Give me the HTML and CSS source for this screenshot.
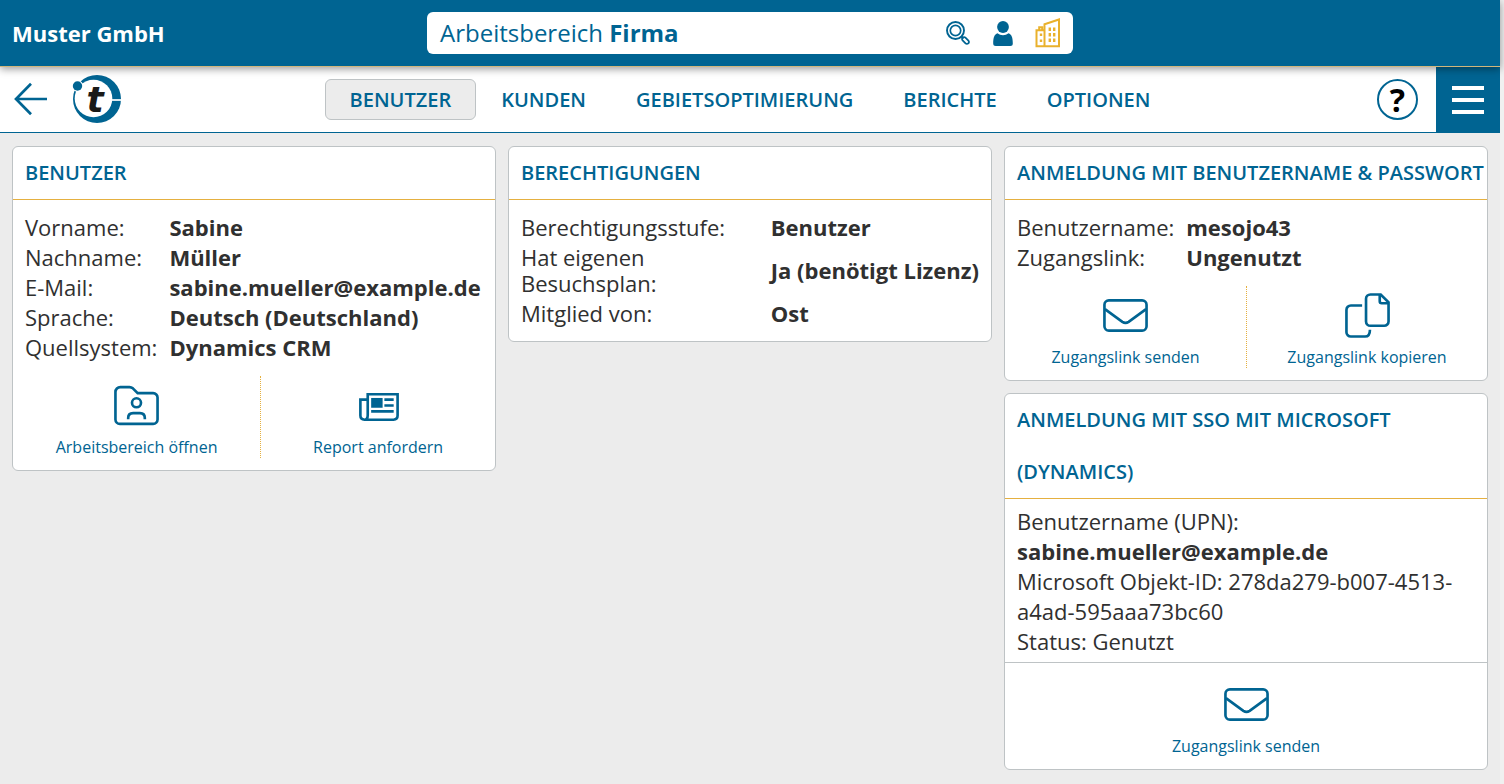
FILE: index.html
```html
<!DOCTYPE html>
<html lang="de">
<head>
<meta charset="utf-8">
<meta name="viewport" content="width=device-width, initial-scale=1">
<title>Muster GmbH – Benutzer</title>
<link rel="stylesheet" href="styles.css">
</head>
<body>
<svg class="sprite" aria-hidden="true">
  <symbol id="mail" viewBox="0 0 48 48">
    <rect x="2.500" y="8.500" width="43" height="31" rx="4.500"/>
    <path d="M3 17.500 20.800 30.500q3.200 2.200 6.400 0L45 17.500"/>
  </symbol>
</svg>
<header class="topbar">
  <div class="company">Muster GmbH</div>
  <div class="workspace">
    <span class="workspace-name">Arbeitsbereich <b>Firma</b></span>
    <button class="tool" aria-label="Suchen">
      <svg width="26" height="26" viewBox="0 0 26 26" fill="none" stroke="currentColor"><circle cx="10.500" cy="10.500" r="8.500" stroke-width="1.900"/><circle cx="10.500" cy="10.500" r="5.200" stroke-width="1.700"/><path d="m16.500 16.500 2 2" stroke-width="1.800"/><rect x="-2" y="-4" width="4" height="8" rx="1.900" stroke-width="1.800" transform="translate(20.500 20.500) rotate(-45)"/></svg>
    </button>
    <button class="tool" aria-label="Benutzer">
      <svg width="26" height="26" viewBox="0 0 26 26" fill="currentColor"><circle cx="13" cy="7" r="5.900"/><path d="M7.500 13.200c3 2.600 8 2.600 11 0 3 1 4.300 4.200 4.300 10.300q0 2.500-2.500 2.500H5.700q-2.500 0-2.500-2.500c0-6.100 1.300-9.300 4.300-10.300z"/></svg>
    </button>
    <button class="tool tool-active" aria-label="Firma">
      <svg width="26" height="30" viewBox="0 0 26 30" fill="none" stroke="currentColor" stroke-width="2"><path d="M9.500 28.200V6.200L24 1.500v26.700zM9.500 12.200h-8v16h8M4.200 12V9.200h3V12"/><path d="M14.800 9.500v3.500M14.800 15v3.500M14.800 20.500V24M19.200 9.500v3.500M19.200 15v3.500M19.200 20.500V24M6 15.500V18M6 21.500V24" stroke-width="2.400"/></svg>
    </button>
  </div>
</header>
<div class="navbar">
  <div class="nav-left">
    <a class="back" href="#" aria-label="Zurück"><svg width="34" height="34" viewBox="0 0 34 34" fill="none" stroke="currentColor" stroke-width="2.700"><path d="M17 1.800 2 17l15 15.200M2 17h31"/></svg></a>
    <a class="logo" href="#" aria-label="Startseite"><svg width="50" height="50" viewBox="0 0 50 50"><circle cx="25" cy="25" r="24" fill="#006492"/><circle cx="21.500" cy="24.500" r="18.800" fill="#fff"/><path d="M39 26h10" stroke="#fff" stroke-width="1.700"/><circle cx="5.500" cy="12" r="5.800" fill="#fff"/><circle cx="5.500" cy="12" r="4.700" fill="#006492"/><text class="logo-letter" x="23" y="38" text-anchor="middle">t</text></svg></a>
  </div>
  <nav class="tabs">
    <a class="tab tab-active" href="#" aria-current="page">BENUTZER</a>
    <a class="tab" href="#">KUNDEN</a>
    <a class="tab" href="#">GEBIETSOPTIMIERUNG</a>
    <a class="tab" href="#">BERICHTE</a>
    <a class="tab" href="#">OPTIONEN</a>
  </nav>
  <div class="nav-right">
    <button class="help" aria-label="Hilfe">?</button>
    <button class="menu" aria-label="Menü"><span></span><span></span><span></span></button>
  </div>
</div>
<main class="board">
  <section class="card">
    <h2>BENUTZER</h2>
    <table class="facts">
      <tr><th scope="row">Vorname:</th><td>Sabine</td></tr>
      <tr><th scope="row">Nachname:</th><td>Müller</td></tr>
      <tr><th scope="row">E-Mail:</th><td>sabine.mueller@example.de</td></tr>
      <tr><th scope="row">Sprache:</th><td>Deutsch (Deutschland)</td></tr>
      <tr><th scope="row">Quellsystem:</th><td>Dynamics CRM</td></tr>
    </table>
    <div class="actions actions-user">
      <button class="action">
        <svg class="icon" viewBox="0 0 48 48"><path d="M2.500 10.200a5 5 0 0 1 5-5h9.300q2 0 3.500 1.300l4.900 4.900H41a4.500 4.500 0 0 1 4.500 4.500v22.400a4.500 4.500 0 0 1-4.500 4.500H7a4.500 4.500 0 0 1-4.500-4.500z"/><circle cx="24" cy="21.200" r="4.600"/><path d="M15.500 38v-1.200q0-5 5-5h7q5 0 5 5V38"/></svg>
        <span>Arbeitsbereich öffnen</span>
      </button>
      <button class="action">
        <svg class="icon" viewBox="0 0 48 48"><path d="M13 34V12.500h30.500v21.800q0 4.200-4.200 4.200H9.700q-4.200 0-4.200-4.200V18H13M13 34q0 4.500-3.300 4.500"/><path d="M16.500 16.300h11.700v10H16.500z" class="solid"/><path d="M30 18h9.500M30 24h9.500M16.500 30h23"/></svg>
        <span>Report anfordern</span>
      </button>
    </div>
  </section>
  <section class="card">
    <h2>BERECHTIGUNGEN</h2>
    <table class="facts">
      <tr><th scope="row">Berechtigungsstufe:</th><td>Benutzer</td></tr>
      <tr><th scope="row">Hat eigenen Besuchsplan:</th><td>Ja (benötigt Lizenz)</td></tr>
      <tr><th scope="row">Mitglied von:</th><td>Ost</td></tr>
    </table>
  </section>
  <div class="stack">
    <section class="card">
      <h2>ANMELDUNG MIT BENUTZERNAME &amp; PASSWORT</h2>
      <table class="facts">
        <tr><th scope="row">Benutzername:</th><td>mesojo43</td></tr>
        <tr><th scope="row">Zugangslink:</th><td>Ungenutzt</td></tr>
      </table>
      <div class="actions">
        <button class="action">
          <svg class="icon"><use href="#mail"/></svg>
          <span>Zugangslink senden</span>
        </button>
        <button class="action">
          <svg class="icon" viewBox="0 0 48 48"><path d="M27 2.500h10.500l8 8V30a4.500 4.500 0 0 1-4.500 4.500H27a4.500 4.500 0 0 1-4.500-4.500V7A4.500 4.500 0 0 1 27 2.500z"/><path d="M36.500 3v6.500q0 2 2 2H45"/><path d="M18.500 13.800H7a4.500 4.500 0 0 0-4.500 4.500V41A4.500 4.500 0 0 0 7 45.500h14.500q5 0 5-7"/></svg>
          <span>Zugangslink kopieren</span>
        </button>
      </div>
    </section>
    <section class="card">
      <h2>ANMELDUNG MIT SSO MIT MICROSOFT (DYNAMICS)</h2>
      <div class="details">
        <p>Benutzername (UPN): <b>sabine.mueller@example.de</b></p>
        <p>Microsoft Objekt-ID: 278da279-b007-4513-a4ad-595aaa73bc60</p>
        <p>Status: Genutzt</p>
      </div>
      <div class="actions actions-footer">
        <button class="action">
          <svg class="icon"><use href="#mail"/></svg>
          <span>Zugangslink senden</span>
        </button>
      </div>
    </section>
  </div>
</main>
</body>
</html>
```
FILE: styles.css
```css
* { box-sizing: border-box; }
html { background: #f0f0f0; }
body {
  display: flex;
  flex-direction: column;
  min-height: 100vh;
  margin: 0;
  padding-right: 4px;
  font-family: "Open Sans", sans-serif;
  font-size: 22px;
  color: #303030;
}
button {
  border: 0;
  background: none;
  padding: 0;
  font: inherit;
  color: inherit;
  cursor: pointer;
}
a { color: inherit; text-decoration: none; }
svg { display: block; overflow: visible; }
.sprite { position: absolute; width: 0; height: 0; }

.topbar {
  position: relative;
  z-index: 1;
  display: grid;
  grid-template-columns: 1fr 646px 1fr;
  align-items: center;
  padding: 12px 0;
  background: #006492;
  border-bottom: 1px solid #d0b67c;
  box-shadow: 0 2px 8px rgba(0, 0, 0, 0.4);
}
.company { padding-left: 12px; font-weight: 700; color: #fff; }
.workspace {
  display: flex;
  align-items: center;
  height: 42px;
  gap: 19px;
  padding: 0 12px 0 13px;
  border-radius: 6px;
  background: #fff;
  color: #006492;
}
.workspace-name { flex: 1; padding-bottom: 2px; font-size: 24px; }
.tool-active { color: #e9b12c; }

.navbar {
  display: grid;
  grid-template-columns: 1fr auto 1fr;
  align-items: center;
  background: #fff;
  border-bottom: 1px solid #006492;
  color: #006492;
}
.nav-left {
  display: flex;
  align-items: center;
  gap: 24px;
  padding: 0 0 2px 14px;
}
.tabs { display: flex; }
.tab {
  padding: 6px 24px;
  border: 1px solid transparent;
  border-radius: 6px;
  font-size: 20px;
  line-height: 27px;
  font-weight: 600;
}
.tab-active { background: #ececec; border-color: #bec3c5; }
.nav-right { display: flex; align-items: center; justify-content: flex-end; gap: 18px; }
.logo-letter { font: italic 700 36px/1 "DejaVu Sans", sans-serif; fill: #1a1a18; }
.help {
  width: 41px;
  height: 41px;
  border: 2px solid #006492;
  border-radius: 50%;
  font-size: 32px;
  line-height: 34px;
  font-weight: 700;
  color: #000;
}
.menu {
  display: flex;
  flex-direction: column;
  align-items: center;
  justify-content: center;
  gap: 8px;
  width: 64px;
  height: 65px;
  background: #006492;
}
.menu span { width: 32px; height: 4px; background: #fff; }

.board {
  flex: 1;
  display: grid;
  grid-template-columns: repeat(3, minmax(0, 1fr));
  align-items: start;
  gap: 12px;
  padding: 13px 12px;
  background: #ececec;
}
.stack { display: grid; gap: 12px; }
.card {
  min-width: 0;
  border: 1px solid #bec3c5;
  border-radius: 6px;
  background: #fff;
}
.card h2 {
  margin: 0;
  padding-left: 12px;
  border-bottom: 1px solid #e5b040;
  font-size: 20px;
  line-height: 52px;
  font-weight: 600;
  color: #006492;
}
.facts {
  margin: 12px 12px 13px;
  border-collapse: collapse;
  line-height: 26px;
}
.facts th { padding: 2px 12px 2px 0; font-weight: 400; text-align: left; }
.facts td { padding: 2px 0; font-weight: 700; white-space: nowrap; }
.details { padding: 7px 12px 6px; line-height: 30px; }
.details p { margin: 0; }

.actions {
  display: grid;
  grid-template-columns: 1fr 1fr;
  padding: 1px 0 12px;
}
.actions-user { grid-template-columns: 20fr 19fr; }
.actions-footer {
  grid-template-columns: 1fr;
  padding-top: 12px;
  border-top: 1px solid #bec3c5;
}
.action {
  display: flex;
  flex-direction: column;
  align-items: center;
  gap: 7px;
  min-height: 82px;
  padding-top: 6px;
  font-size: 16px;
  line-height: 22px;
  color: #006492;
}
.action + .action { border-left: 1px dotted #e5b040; }
.icon {
  width: 47px;
  height: 47px;
  fill: none;
  stroke: currentColor;
  stroke-width: 2.700;
}
.solid { fill: currentColor; stroke: none; }
```
